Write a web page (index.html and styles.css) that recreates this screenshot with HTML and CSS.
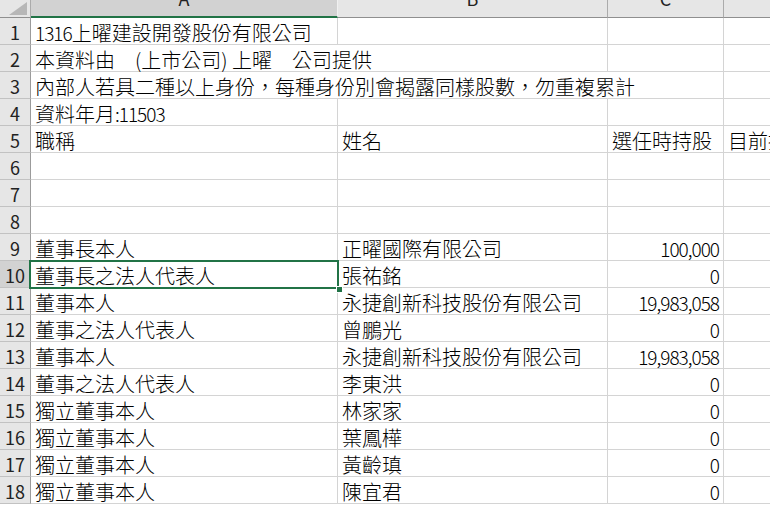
FILE: index.html
```html
<!DOCTYPE html>
<html lang="zh-Hant">

<head>
    <meta charset="UTF-8">
    <title>1316 上曜 內部人持股</title>
    <link rel="stylesheet" href="styles.css">
</head>

<body>
    <div class="sheet">
        <!-- column headers -->
        <div class="corner">
            <svg width="30" height="17" viewBox="0 0 30 17"><polygon points="27,2 27,15 9,15" fill="#b7b7b7" /></svg>
        </div>
        <div class="col-head active"><span>A</span></div>
        <div class="col-head"><span>B</span></div>
        <div class="col-head"><span>C</span></div>
        <div class="col-head"><span>D</span></div>

        <div class="row-head">1</div>
        <div class="cell"><span class="fig">1316</span>上曜建設開發股份有限公司</div>
        <div class="cell"></div>
        <div class="cell"></div>
        <div class="cell"></div>

        <div class="row-head">2</div>
        <div class="cell span2">本資料由　(上市公司) 上曜　公司提供</div>
        <div class="cell"></div>
        <div class="cell"></div>

        <div class="row-head">3</div>
        <div class="cell span3">內部人若具二種以上身份，每種身份別會揭露同樣股數，勿重複累計</div>
        <div class="cell"></div>

        <div class="row-head">4</div>
        <div class="cell">資料年月<span class="fig">:11503</span></div>
        <div class="cell"></div>
        <div class="cell"></div>
        <div class="cell"></div>

        <div class="row-head">5</div>
        <div class="cell">職稱</div>
        <div class="cell">姓名</div>
        <div class="cell">選任時持股</div>
        <div class="cell">目前持股</div>

        <div class="row-head">6</div>
        <div class="cell"></div>
        <div class="cell"></div>
        <div class="cell"></div>
        <div class="cell"></div>

        <div class="row-head">7</div>
        <div class="cell"></div>
        <div class="cell"></div>
        <div class="cell"></div>
        <div class="cell"></div>

        <div class="row-head">8</div>
        <div class="cell"></div>
        <div class="cell"></div>
        <div class="cell"></div>
        <div class="cell"></div>

        <div class="row-head">9</div>
        <div class="cell">董事長本人</div>
        <div class="cell">正曜國際有限公司</div>
        <div class="cell num"><span class="fig">100,000</span></div>
        <div class="cell"></div>

        <div class="row-head active">10</div>
        <div class="cell selected">董事長之法人代表人</div>
        <div class="cell">張祐銘</div>
        <div class="cell num"><span class="fig">0</span></div>
        <div class="cell"></div>

        <div class="row-head">11</div>
        <div class="cell">董事本人</div>
        <div class="cell">永捷創新科技股份有限公司</div>
        <div class="cell num"><span class="fig">19,983,058</span></div>
        <div class="cell"></div>

        <div class="row-head">12</div>
        <div class="cell">董事之法人代表人</div>
        <div class="cell">曾鵬光</div>
        <div class="cell num"><span class="fig">0</span></div>
        <div class="cell"></div>

        <div class="row-head">13</div>
        <div class="cell">董事本人</div>
        <div class="cell">永捷創新科技股份有限公司</div>
        <div class="cell num"><span class="fig">19,983,058</span></div>
        <div class="cell"></div>

        <div class="row-head">14</div>
        <div class="cell">董事之法人代表人</div>
        <div class="cell">李東洪</div>
        <div class="cell num"><span class="fig">0</span></div>
        <div class="cell"></div>

        <div class="row-head">15</div>
        <div class="cell">獨立董事本人</div>
        <div class="cell">林家家</div>
        <div class="cell num"><span class="fig">0</span></div>
        <div class="cell"></div>

        <div class="row-head">16</div>
        <div class="cell">獨立董事本人</div>
        <div class="cell">葉鳳樺</div>
        <div class="cell num"><span class="fig">0</span></div>
        <div class="cell"></div>

        <div class="row-head">17</div>
        <div class="cell">獨立董事本人</div>
        <div class="cell">黃齡瑱</div>
        <div class="cell num"><span class="fig">0</span></div>
        <div class="cell"></div>

        <div class="row-head">18</div>
        <div class="cell">獨立董事本人</div>
        <div class="cell">陳宜君</div>
        <div class="cell num"><span class="fig">0</span></div>
        <div class="cell"></div>
    </div>
</body>

</html>
```

FILE: styles.css
```css
body {
    margin: 0;
    background-color: #fff;
    overflow: hidden;
    font-family: "Noto Sans CJK TC", sans-serif;
    color: #000;
}

.sheet {
    display: grid;
    grid-template-columns: 31px 307px 270px 116px 140px;
    grid-template-rows: 18px;
    grid-auto-rows: 27px;
    width: 864px;
}

.corner {
    background-color: #e6e6e6;
    border-right: 1px solid #ababab;
    border-bottom: 1px solid #8f8f8f;
}

.corner svg {
    display: block;
}

.col-head {
    display: flex;
    align-items: flex-end;
    justify-content: center;
    overflow: hidden;
    background-color: #e6e6e6;
    border-right: 1px solid #ababab;
    border-bottom: 1px solid #8f8f8f;
    font-size: 18px;
    color: #222;
}

.col-head span {
    line-height: 18px;
    margin-bottom: 10px;
}

.col-head.active {
    background-color: #d2d2d2;
    border-right-color: #f0f0f0;
    border-bottom: 2px solid #217346;
}

.col-head.active span {
    margin-bottom: 9px;
}

.row-head {
    display: flex;
    align-items: flex-end;
    justify-content: center;
    background-color: #e6e6e6;
    border-right: 1px solid #9b9b9b;
    border-bottom: 1px solid #c2c2c2;
    font-size: 18px;
    line-height: 20px;
    padding-bottom: 2px;
    color: #222;
}

.row-head.active {
    background-color: #d2d2d2;
}

.cell {
    display: flex;
    align-items: flex-end;
    padding: 0 4px;
    border-right: 1px solid #d4d4d4;
    border-bottom: 1px solid #d4d4d4;
    font-size: 20px;
    font-weight: 300;
    line-height: 22px;
    white-space: nowrap;
}

/* numbers run narrower than the ideographs */
.fig {
    font-size: 19px;
    letter-spacing: -1px;
}

.span2 {
    grid-column: span 2;
}

.span3 {
    grid-column: span 3;
}

.num {
    justify-content: flex-end;
}

/* active cell outline with fill handle */
.selected {
    position: relative;
}

.selected::after {
    content: '';
    position: absolute;
    left: -2px;
    top: -1px;
    right: -2px;
    bottom: -2px;
    border: 2px solid #217346;
}

.selected::before {
    content: '';
    position: absolute;
    right: -6px;
    bottom: -6px;
    width: 5px;
    height: 5px;
    background-color: #217346;
    border: 1px solid #fff;
    z-index: 1;
}
```
